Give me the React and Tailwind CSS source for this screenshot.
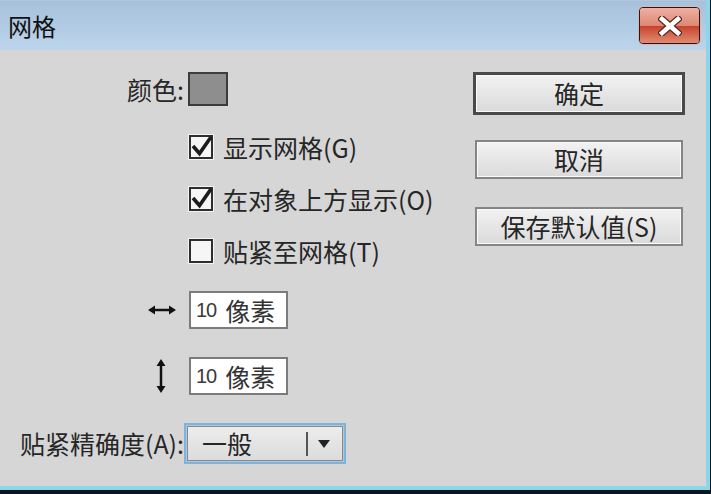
import React from "react";

function Check({ checked }) {
  return (
    <div className="relative w-[24px] h-[24px] shrink-0 border-2 border-[#2e2e2e] bg-[#f6f6f6] shadow-[0_0_0_1px_#f4f4f4]">
      {checked && (
        <svg className="absolute top-[-2px] left-[-2px] overflow-visible" width="24" height="24" viewBox="0 0 24 24">
          <path d="M4 11 L10.5 18.5 L22 2" stroke="#1c1c1c" strokeWidth="3.6" fill="none" strokeLinejoin="miter" />
        </svg>
      )}
    </div>
  );
}

function CheckRow({ checked, children }) {
  return (
    <div className="flex items-center h-[52px] pl-[189px]">
      <Check checked={checked} />
      <span className="ml-[10px] text-[25px] leading-[28px] text-[#262626]">{children}</span>
    </div>
  );
}

function PxInput() {
  return (
    <div className="w-[99px] h-[38px] border-2 border-[#7c7c7c] bg-white flex items-center pl-[5px]">
      <span className="text-[20px] leading-none text-[#3a3a3a] font-['Liberation_Sans',sans-serif] tracking-[-1px]">10</span>
      <span className="ml-[9px] text-[25px] leading-none text-[#333]">像素</span>
    </div>
  );
}

function Btn({ children, primary }) {
  if (primary) {
    return (
      <div className="w-[212px] h-[43px] border-[3px] border-[#4a4a4a] bg-gradient-to-b from-[#f2f2f2] to-[#dadada] flex items-center justify-center text-[25px] leading-none text-[#262626] shadow-[inset_0_0_0_1px_#fafafa]">
        {children}
      </div>
    );
  }
  return (
    <div className="w-[208px] h-[39px] border-2 border-[#858585] bg-gradient-to-b from-[#f2f2f2] to-[#dadada] flex items-center justify-center text-[25px] leading-none text-[#262626] shadow-[inset_0_0_0_1px_#fafafa]">
      {children}
    </div>
  );
}

export default function App() {
  return (
    <div className="w-[711px] h-[494px] bg-[#0b1720] overflow-hidden font-['Noto_Sans_CJK_SC',sans-serif]">
      <div className="w-[710px] h-[490px] flex flex-col border-r-4 border-b-4 border-[#8ed5ea]">
        {/* Title bar */}
        <div className="h-[50px] shrink-0 bg-gradient-to-b from-[#a7c1dc] to-[#bcd5ec] border-t border-[#b4c6d8] flex items-center justify-between pl-[8px] pr-[6px]">
          <span className="text-[24px] leading-none text-[#111]">网格</span>
          <div className="w-[61px] h-[37px] rounded-[4px] border border-[#2a1616] overflow-hidden flex flex-col relative shadow-[0_0_0_1px_#d9b7b0]">
            <div className="h-1/2 bg-gradient-to-b from-[#eeb0a2] to-[#de8774]"></div>
            <div className="h-1/2 bg-gradient-to-b from-[#c5412a] to-[#e28a74]"></div>
            <svg className="absolute left-[18px] top-[8px]" width="24" height="20" viewBox="0 0 24 20">
              <path d="M4 3 L20 17 M20 3 L4 17" stroke="#5a2a22" strokeWidth="7" strokeLinecap="square" />
              <path d="M4 3 L20 17 M20 3 L4 17" stroke="#ffffff" strokeWidth="4.5" strokeLinecap="square" />
            </svg>
          </div>
        </div>

        {/* Body */}
        <div className="flex-1 bg-[#d6d6d6] flex border-b border-[#e2d4d4]">
          {/* Left column */}
          <div className="w-[473px] flex flex-col pt-[22px]">
            <div className="flex items-center h-[34px]">
              <div className="w-[188px] flex justify-end pr-[4px]">
                <span className="text-[25px] leading-none text-[#262626]">颜色:</span>
              </div>
              <div className="w-[40px] h-[34px] bg-[#8e8e8e] border-2 border-[#3c3c3c]"></div>
            </div>
            <div className="h-[15px]"></div>
            <CheckRow checked>显示网格(G)</CheckRow>
            <CheckRow checked>在对象上方显示(O)</CheckRow>
            <CheckRow>贴紧至网格(T)</CheckRow>
            <div className="h-[14px]"></div>
            <div className="flex items-center h-[38px]">
              <div className="w-[189px] flex justify-start pl-[148px]">
                <svg width="28" height="10" viewBox="0 0 28 10">
                  <path d="M6 5 L22 5" stroke="#111" strokeWidth="2.5" />
                  <path d="M0 5 L7 0.5 L7 9.5 Z M28 5 L21 0.5 L21 9.5 Z" fill="#111" />
                </svg>
              </div>
              <PxInput />
            </div>
            <div className="h-[28px]"></div>
            <div className="flex items-center h-[38px]">
              <div className="w-[189px] flex justify-start pl-[156px]">
                <svg width="10" height="34" viewBox="0 0 10 34">
                  <path d="M5 6 L5 28" stroke="#111" strokeWidth="2.5" />
                  <path d="M5 0 L0.5 7 L9.5 7 Z M5 34 L0.5 27 L9.5 27 Z" fill="#111" />
                </svg>
              </div>
              <PxInput />
            </div>
            <div className="h-[28px]"></div>
            <div className="flex items-center h-[41px]">
              <div className="w-[184px] flex justify-end">
                <span className="text-[25px] leading-none text-[#262626]">贴紧精确度(A):</span>
              </div>
              <div className="w-[162px] h-[41px] border-2 border-[#7fb3da] bg-[#a9c9e2] p-[1px]">
                <div className="w-full h-full border border-[#8a8a8a] bg-gradient-to-b from-[#ececec] to-[#dcdcdc] flex items-center">
                  <span className="ml-[14px] text-[25px] leading-none text-[#262626]">一般</span>
                  <div className="ml-auto w-[2px] h-[24px] bg-[#555]"></div>
                  <svg className="ml-[10px] mr-[12px]" width="12" height="10" viewBox="0 0 12 10">
                    <path d="M0 1 L12 1 L6 9 Z" fill="#222" />
                  </svg>
                </div>
              </div>
            </div>
          </div>

          {/* Right column */}
          <div className="flex flex-col pt-[22px]">
            <Btn primary>确定</Btn>
            <div className="ml-[2px] mt-[25px]">
              <Btn>取消</Btn>
            </div>
            <div className="ml-[2px] mt-[28px]">
              <Btn>保存默认值(S)</Btn>
            </div>
          </div>
        </div>
      </div>
    </div>
  );
}
